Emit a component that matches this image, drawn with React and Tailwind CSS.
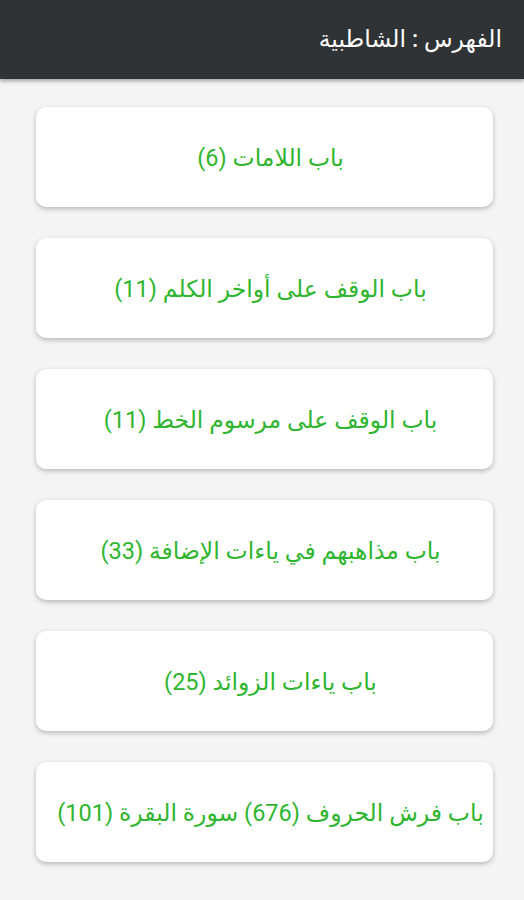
import React from "react";

const chapters = [
  "باب اللامات (6)",
  "باب الوقف على أواخر الكلم (11)",
  "باب الوقف على مرسوم الخط (11)",
  "باب مذاهبهم في ياءات الإضافة (33)",
  "باب ياءات الزوائد (25)",
  "باب فرش الحروف (676) سورة البقرة (101)",
];

export default function App() {
  return (
    <div
      dir="rtl"
      className="min-h-[900px] bg-[#f4f4f4]"
      style={{ fontFamily: "Roboto, 'DejaVu Sans', sans-serif" }}
    >
      <header className="h-[79px] bg-[#303335] flex items-center pr-[22px] shadow-[0_2px_4px_rgba(0,0,0,0.35)]">
        <h1 className="text-white text-[23.5px] font-medium">الفهرس : الشاطبية</h1>
      </header>

      <div className="flex flex-col gap-[31px] pt-[28px] pr-[31px] pl-[36px]">
        {chapters.map((c) => (
          <div
            key={c}
            className="h-[100px] bg-white rounded-[10px] shadow-[0_2px_5px_rgba(0,0,0,0.25)] flex items-center justify-center pt-[4px] pr-[8px] pl-[20px]"
          >
            <span className="text-[#2fb52f] text-[23.5px]">{c}</span>
          </div>
        ))}
      </div>
    </div>
  );
}
